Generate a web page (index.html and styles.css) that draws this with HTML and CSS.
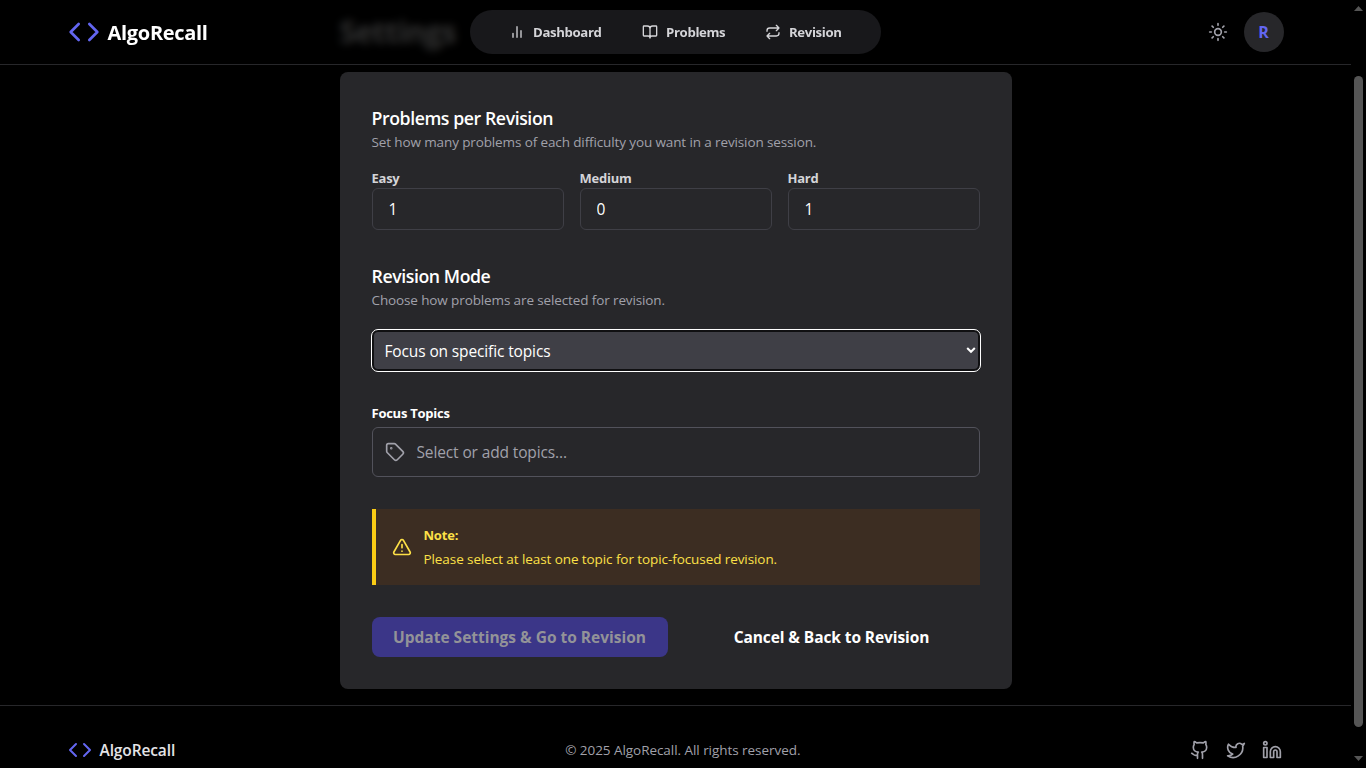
FILE: index.html
```html
<!DOCTYPE html>
<html lang="en">
<head>
<meta charset="utf-8">
<title>AlgoRecall</title>
<link rel="stylesheet" href="styles.css">
</head>
<body>
<div class="page">
  <header class="header">
    <div class="container header-row">
      <a class="brand">
        <svg class="icon brand-icon" viewBox="0 0 24 24"><path d="m16 18 6-6-6-6M8 6l-6 6 6 6"/></svg>
        <span class="brand-name">AlgoRecall</span>
      </a>
      <nav class="nav">
        <a class="nav-item nav-dashboard"><svg class="icon" viewBox="0 0 24 24"><path d="M18 20V10M12 20V4M6 20v-6"/></svg><span>Dashboard</span></a>
        <a class="nav-item nav-problems"><svg class="icon" viewBox="0 0 24 24"><path d="M12 7v14M3 18a1 1 0 0 1-1-1V4a1 1 0 0 1 1-1h5a4 4 0 0 1 4 4 4 4 0 0 1 4-4h5a1 1 0 0 1 1 1v13a1 1 0 0 1-1 1h-6a3 3 0 0 0-3 3 3 3 0 0 0-3-3z"/></svg><span>Problems</span></a>
        <a class="nav-item nav-revision"><svg class="icon" viewBox="0 0 24 24"><path d="m17 2 4 4-4 4M3 11v-1a4 4 0 0 1 4-4h14M7 22l-4-4 4-4M21 13v1a4 4 0 0 1-4 4H3"/></svg><span>Revision</span></a>
      </nav>
      <div class="account">
        <svg class="icon sun" viewBox="0 0 24 24"><circle cx="12" cy="12" r="4"/><path d="M12 2v2M12 20v2M4.930 4.930l1.410 1.410M17.660 17.660l1.410 1.410M2 12h2M20 12h2M6.340 17.660l-1.410 1.410M19.070 4.930l-1.410 1.410"/></svg>
        <div class="avatar">R</div>
      </div>
    </div>
  </header>
  <main class="main">
    <h1 class="title">Settings</h1>
    <form class="card">
      <section>
        <h2 class="section-title">Problems per Revision</h2>
        <p class="hint">Set how many problems of each difficulty you want in a revision session.</p>
        <div class="counts">
          <label class="count"><span class="count-label">Easy</span><input class="count-input" value="1"></label>
          <label class="count"><span class="count-label">Medium</span><input class="count-input" value="0"></label>
          <label class="count"><span class="count-label">Hard</span><input class="count-input" value="1"></label>
        </div>
      </section>
      <section class="mode">
        <h2 class="section-title">Revision Mode</h2>
        <p class="hint">Choose how problems are selected for revision.</p>
        <div class="select">
          <span>Focus on specific topics</span>
          <svg class="chevron" viewBox="0 0 10 8"><path d="m1.200 2 3.800 3.800L8.800 2"/></svg>
        </div>
      </section>
      <section class="topics">
        <div class="topics-label">Focus Topics</div>
        <div class="topics-box">
          <svg class="icon tag" viewBox="0 0 24 24"><path d="M12.586 2.586A2 2 0 0 0 11.172 2H4a2 2 0 0 0-2 2v7.172a2 2 0 0 0 .586 1.414l8.704 8.704a2.426 2.426 0 0 0 3.420 0l6.580-6.580a2.426 2.426 0 0 0 0-3.420z"/><circle cx="7.500" cy="7.500" r=".5" fill="currentColor"/></svg>
          <span>Select or add topics...</span>
        </div>
      </section>
      <div class="note">
        <svg class="icon warn" viewBox="0 0 24 24"><path d="m21.730 18-8-14a2 2 0 0 0-3.480 0l-8 14A2 2 0 0 0 4 21h16a2 2 0 0 0 1.730-3M12 9v4M12 17h.01"/></svg>
        <div class="note-text">
          <strong>Note:</strong>
          <span>Please select at least one topic for topic-focused revision.</span>
        </div>
      </div>
      <div class="actions">
        <button type="button" class="btn btn-primary">Update Settings &amp; Go to Revision</button>
        <button type="button" class="btn btn-cancel">Cancel &amp; Back to Revision</button>
      </div>
    </form>
  </main>
  <footer class="footer">
    <div class="container footer-row">
      <div class="foot-brand">
        <svg class="icon" viewBox="0 0 24 24"><path d="m16 18 6-6-6-6M8 6l-6 6 6 6"/></svg>
        <span>AlgoRecall</span>
      </div>
      <p class="copyright">© 2025 AlgoRecall. All rights reserved.</p>
      <div class="social">
        <svg class="icon" viewBox="0 0 24 24"><path d="M15 22v-4a4.800 4.800 0 0 0-1-3.500c3 0 6-2 6-5.500.08-1.250-.27-2.480-1-3.500.28-1.150.28-2.350 0-3.500 0 0-1 0-3 1.500-2.640-.5-5.360-.5-8 0C6 2 5 2 5 2c-.3 1.150-.3 2.350 0 3.500A5.403 5.403 0 0 0 4 9c0 3.500 3 5.500 6 5.500-.39.49-.68 1.050-.85 1.650-.17.6-.22 1.230-.15 1.850v4M9 18c-4.510 2-5-2-7-2"/></svg>
        <svg class="icon" viewBox="0 0 24 24"><path d="M22 4s-.7 2.100-2 3.400c1.600 10-9.400 17.300-18 11.600 2.200.1 4.400-.6 6-2C3 15.500.5 9.600 3 5c2.200 2.600 5.600 4.100 9 4-.9-4.200 4-6.600 7-3.800 1.100 0 3-1.200 3-1.200z"/></svg>
        <svg class="icon" viewBox="0 0 24 24"><path d="M16 8a6 6 0 0 1 6 6v7h-4v-7a2 2 0 0 0-4 0v7h-4v-7a6 6 0 0 1 6-6z"/><path d="M2 9h4v12H2z"/><circle cx="4" cy="4" r="2"/></svg>
      </div>
    </div>
  </footer>
</div>
<div class="scrollbar">
  <svg class="arrow" viewBox="0 0 9 5"><path d="M4.500 0 9 5H0z"/></svg>
  <div class="thumb"></div>
  <svg class="arrow" viewBox="0 0 9 5"><path d="M0 0h9L4.500 5z"/></svg>
</div>
</body>
</html>
```
FILE: styles.css
```css
* { box-sizing: border-box; margin: 0; padding: 0; }

body {
  display: grid;
  grid-template-columns: 1fr 15px;
  height: 768px;
  overflow: hidden;
  background: #000;
  color: #fff;
  font-family: "Open Sans", "Noto Sans", sans-serif;
  font-size: 13.5px;
  line-height: 20px;
}

.page { position: relative; height: 768px; overflow: hidden; }

.container {
  max-width: 1280px;
  margin: 0 auto;
  padding: 0 32px;
}

.icon {
  flex: none;
  display: block;
  width: 20px;
  height: 20px;
  fill: none;
  stroke: currentColor;
  stroke-width: 2;
  stroke-linecap: round;
  stroke-linejoin: round;
}

.header {
  position: absolute;
  top: 0;
  left: 0;
  right: 0;
  z-index: 2;
  height: 65px;
  background: rgba(0, 0, 0, .8);
  border-bottom: 1px solid #27272a;
  backdrop-filter: blur(4px);
}
.header-row {
  display: grid;
  grid-template-columns: 1fr 411px 1fr;
  align-items: center;
  height: 64px;
}
.brand { display: flex; align-items: center; gap: 8px; }
.brand-icon { width: 32px; height: 32px; color: #6366f1; }
.brand-name { padding-top: 2px; font-size: 20px; font-weight: 700; line-height: 28px; letter-spacing: -.3px; }

.nav {
  display: flex;
  gap: 40px;
  height: 44px;
  padding: 0 39px;
  border-radius: 22px;
  background: #18181b;
}
.nav-item {
  display: flex;
  align-items: center;
  gap: 8px;
  color: #d4d4d8;
  font-size: 13.2px;
  font-weight: 700;
  white-space: nowrap;
}
.nav-item .icon { width: 16px; height: 16px; }
.nav-dashboard { width: 93px; }
.nav-problems { width: 83px; }
.nav-item span { letter-spacing: -.35px; }

.account { display: flex; align-items: center; justify-content: flex-end; gap: 16px; }
.sun { color: #a1a1aa; }
.avatar {
  width: 40px;
  height: 40px;
  border-radius: 50%;
  background: #27272a;
  color: #6366f1;
  font-size: 16px;
  font-weight: 700;
  line-height: 40px;
  text-align: center;
}

.main { width: 672px; margin: 0 auto; padding: 14px 0 16px; }
.title {
  height: 36px;
  margin-bottom: 22px;
  font-size: 30px;
  font-weight: 700;
  line-height: 36px;
  letter-spacing: -.6px;
}

.card {
  height: 617px;
  padding: 32px;
  border-radius: 8px;
  background: #27272a;
}
.section-title { font-size: 17.7px; font-weight: 600; line-height: 28px; letter-spacing: -.42px; }
.hint { color: #a1a1aa; letter-spacing: -.12px; }

.counts {
  display: grid;
  grid-template-columns: repeat(3, 1fr);
  gap: 16px;
  margin-top: 16px;
}
.count { display: flex; flex-direction: column; }
.count-label { color: #d4d4d8; font-size: 13px; font-weight: 700; letter-spacing: -.25px; }
.count-input {
  width: 100%;
  height: 42px;
  padding: 0 16px;
  border: 1px solid #3f3f46;
  border-radius: 6px;
  background: transparent;
  color: #fff;
  font: 15.5px "Open Sans", "Noto Sans", sans-serif;
}

.mode { margin-top: 32px; }
.select {
  display: flex;
  align-items: center;
  justify-content: space-between;
  height: 41px;
  margin-top: 20px;
  padding: 0 2px 0 11px;
  border: 2px solid #101012;
  border-radius: 6px;
  outline: 1px solid #fff;
  background: #3f3f46;
  font-size: 15.5px;
  letter-spacing: -.13px;
}
.chevron { width: 10px; height: 8px; margin-bottom: 2px; fill: none; stroke: #fff; stroke-width: 2; }

.topics { margin-top: 32px; }
.topics-label { height: 20px; font-size: 13px; font-weight: 700; letter-spacing: -.25px; }
.topics-box {
  display: flex;
  align-items: center;
  gap: 12px;
  height: 50px;
  margin-top: 4px;
  padding: 0 12px;
  border: 1px solid #52525b;
  border-radius: 6px;
  color: #a1a1aa;
  font-size: 15.5px;
  letter-spacing: -.13px;
}

.note {
  display: flex;
  align-items: center;
  gap: 12px;
  height: 76px;
  margin-top: 32px;
  padding: 0 16px;
  border-left: 4px solid #facc15;
  background: #3c2d22;
  color: #fde047;
}
.note-text { display: flex; flex-direction: column; gap: 4px; letter-spacing: -.08px; }
.note-text strong { font-size: 13px; font-weight: 700; letter-spacing: -.2px; }

.actions {
  display: grid;
  grid-template-columns: 1fr 1fr;
  gap: 16px;
  margin-top: 32px;
}
.btn {
  height: 40px;
  border: 0;
  border-radius: 8px;
  background: transparent;
  color: #fff;
  font: 700 15.5px/24px "Open Sans", "Noto Sans", sans-serif;
  white-space: nowrap;
}
.btn-primary { background: #3b3688; color: #939398; letter-spacing: -.01px; }
.btn-cancel { letter-spacing: -.09px; }

.footer { height: 90px; border-top: 1px solid #27272a; }
.footer-row {
  display: flex;
  align-items: center;
  justify-content: space-between;
  padding-top: 32px;
}
.foot-brand { display: flex; align-items: center; gap: 8px; height: 24px; color: #e4e4e7; font-size: 15.5px; font-weight: 600; letter-spacing: -.12px; }
.foot-brand .icon { width: 24px; height: 24px; color: #6366f1; }
.copyright { color: #a1a1aa; letter-spacing: -.05px; }
.social { display: flex; gap: 16px; margin-right: 1px; color: #a1a1aa; }

.scrollbar {
  display: flex;
  flex-direction: column;
  align-items: center;
  padding: 6px 0 7px;
  background: #000;
}
.arrow { flex: none; width: 9px; height: 5px; fill: #555; }
.thumb { width: 9px; height: 651px; margin: 65px 0 29px; border-radius: 5px; background: #555; }
```
